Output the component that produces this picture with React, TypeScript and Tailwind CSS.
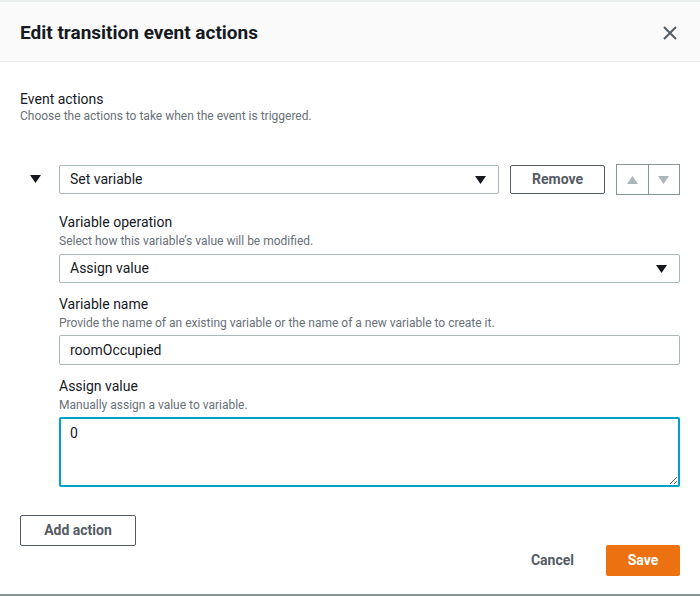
import React from "react";

const Caret = ({ up = false, color = "#16191f" }: { up?: boolean; color?: string }) => (
  <svg width="11" height="8" viewBox="0 0 11 8" className={up ? "rotate-180" : ""}>
    <polygon points="0,0 11,0 5.5,8" fill={color} />
  </svg>
);

const Label = ({ title, desc }: { title: string; desc: string }) => (
  <div>
    <div className="text-[14px] leading-5 text-[#16191f]">{title}</div>
    <div className="text-[12px] leading-4 text-[#687078] mt-[1px]">{desc}</div>
  </div>
);

const App: React.FC = () => {
  return (
    <div
      className="w-[700px] h-[596px] bg-white flex flex-col border-b-2 border-[#879596] overflow-hidden"
      style={{ fontFamily: "Roboto, 'Noto Sans', sans-serif" }}
    >
      <div className="h-[62px] bg-[#fafafa] border-t-2 border-b border-[#eaeded] flex items-center justify-between pl-5 pr-[22px] pt-[3px] shrink-0">
        <h1 className="text-[19px] font-bold text-[#16191f]">Edit transition event actions</h1>
        <svg width="16" height="16" viewBox="0 0 16 16">
          <path d="M2 2 L14 14 M14 2 L2 14" stroke="#545b64" strokeWidth="2" fill="none" />
        </svg>
      </div>

      <div className="px-5 pt-[27px] flex-1 flex flex-col">
        <div>
          <div className="text-[14px] leading-5 text-[#16191f]">Event actions</div>
          <div className="text-[12px] leading-4 text-[#687078] -mt-[1px]">
            Choose the actions to take when the event is triggered.
          </div>
        </div>

        <div className="flex mt-[40px]">
          <div className="w-10 flex items-start pt-[11px] pl-[10px]">
            <Caret />
          </div>
          <div className="flex-1">
            <div className="flex items-center">
              <div className="w-[440px] h-[29px] border border-[#aab7b8] rounded-[2px] flex items-center justify-between pl-[10px] pr-[12px] text-[14px] text-[#16191f]">
                <span>Set variable</span>
                <Caret />
              </div>
              <button className="ml-[11px] w-[95px] h-[29px] border border-[#545b64] rounded-[2px] text-[14px] font-bold text-[#545b64]">
                Remove
              </button>
              <div className="ml-[11px] h-[31px] w-[64px] border border-[#879596] flex">
                <div className="flex-1 flex items-center justify-center border-r border-[#879596]">
                  <Caret up color="#aab7b8" />
                </div>
                <div className="flex-1 flex items-center justify-center">
                  <Caret color="#aab7b8" />
                </div>
              </div>
            </div>

            <div className="mt-[17px]">
              <Label title="Variable operation" desc="Select how this variable’s value will be modified." />
              <div className="mt-[5px] h-[29px] border border-[#aab7b8] rounded-[2px] flex items-center justify-between pl-[10px] pr-[12px] text-[14px] text-[#16191f]">
                <span>Assign value</span>
                <Caret />
              </div>
            </div>

            <div className="mt-[11px]">
              <Label
                title="Variable name"
                desc="Provide the name of an existing variable or the name of a new variable to create it."
              />
              <input
                readOnly
                defaultValue="roomOccupied"
                className="mt-[4px] w-full h-[30px] border border-[#aab7b8] rounded-[2px] px-[10px] text-[14px] text-[#16191f] outline-none"
              />
            </div>

            <div className="mt-[11px]">
              <Label title="Assign value" desc="Manually assign a value to variable." />
              <textarea
                readOnly
                defaultValue="0"
                className="mt-[4px] block w-full h-[70px] border-2 border-[#00a1c9] rounded-[2px] px-[9px] py-[4px] text-[14px] text-[#16191f] outline-none"
              />
            </div>
          </div>
        </div>

        <div className="mt-[28px]">
          <button className="w-[116px] h-[31px] border border-[#545b64] rounded-[2px] text-[14px] font-bold text-[#545b64]">
            Add action
          </button>
        </div>

        <div className="flex justify-end items-center -mt-[1px]">
          <button className="text-[14px] font-bold text-[#545b64] mr-[32px]">Cancel</button>
          <button className="w-[74px] h-[31px] bg-[#ec7211] rounded-[2px] text-[14px] font-bold text-white">
            Save
          </button>
        </div>
      </div>
    </div>
  );
};

export default App;
